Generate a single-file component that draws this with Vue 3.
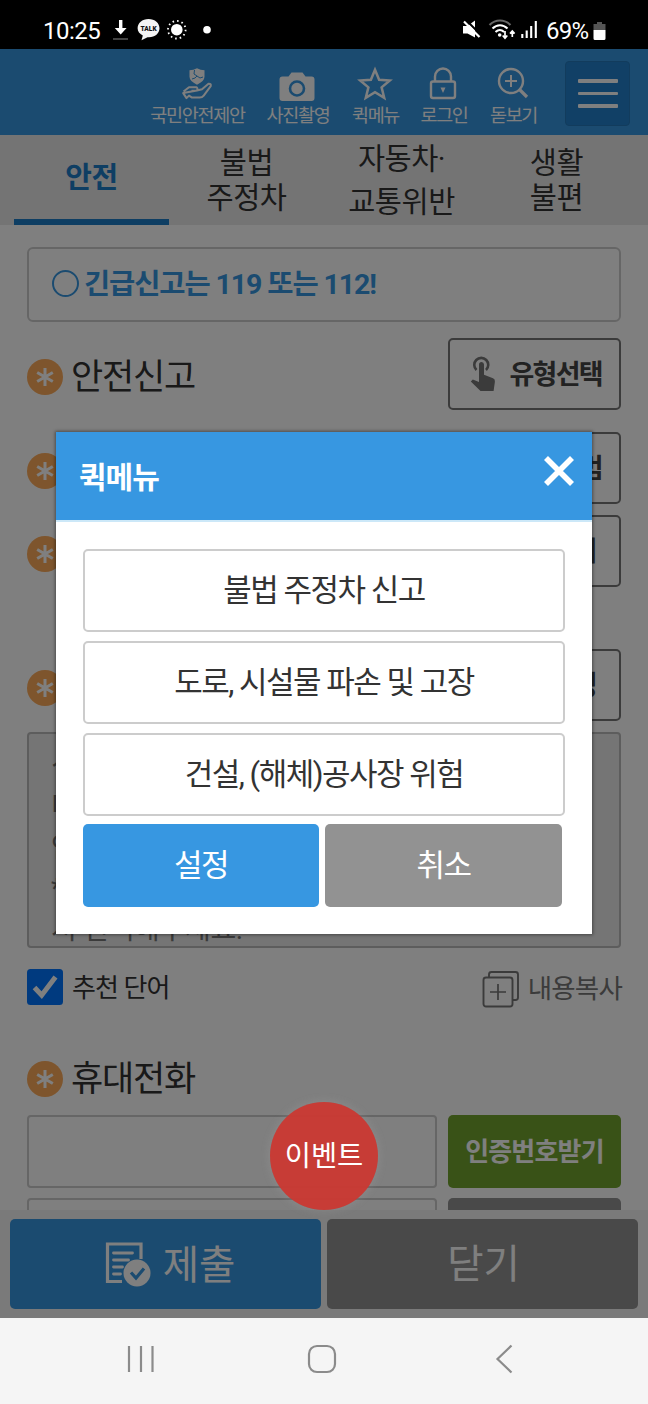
<script setup>
const tools = [
  { name: '국민안전제안', icon: 'hand', cls: 't1' },
  { name: '사진촬영', icon: 'camera', cls: 't2' },
  { name: '퀵메뉴', icon: 'star', cls: 't3' },
  { name: '로그인', icon: 'lock', cls: 't4' },
  { name: '돋보기', icon: 'zoom', cls: 't5' },
]
const tabs = [
  { lines: ['안전'], active: true },
  { lines: ['불법', '주정차'] },
  { lines: ['자동차·', '교통위반'], loose: true },
  { lines: ['생활', '불편'] },
]
const rows = [
  { label: '안전신고', action: '유형선택', cls: 'r1', touch: true },
  { action: '앨범', cls: 'r2' },
  { action: '찾기', cls: 'r3' },
  { action: '음성', cls: 'r4' },
]
const quick = ['불법 주정차 신고', '도로, 시설물 파손 및 고장', '건설, (해체)공사장 위험']
</script>

<template>
  <div class="phone">
    <header class="status">
      <span class="clock">10:25</span>
      <svg class="status-left" width="106" height="30" viewBox="110 16 106 30">
        <path d="M119 21h3.400v8h4.200l-5.900 6.500-5.900-6.500h4.200z" fill="#fff" />
        <path d="M113 40h15" stroke="#555" stroke-width="1.600" />
        <path d="M148.500 20c6.500 0 11 4.200 11 9.300s-4.500 9-10.500 9l-1.500-.1-6 3 1.300-4.600c-3.200-1.700-5.200-4.300-5.200-7.300 0-5.100 4.600-9.300 10.900-9.300z" fill="#f4f4f4" />
        <text x="148.600" y="32.300" text-anchor="middle" font-family="Roboto, sans-serif" font-weight="900" font-size="7" textLength="16" lengthAdjust="spacingAndGlyphs" fill="#111">TALK</text>
        <circle cx="176.800" cy="30.700" r="5.800" fill="#fff" />
        <circle cx="176.800" cy="30.700" r="8.800" fill="none" stroke="#fff" stroke-width="1.800" stroke-dasharray="1.6 3.007" />
        <circle cx="207" cy="30.700" r="3.800" fill="#fff" />
      </svg>
      <svg class="status-right" width="80" height="30" viewBox="460 16 80 30">
        <path d="M463 27h4.500l7.500-5.500v17L467.500 34.500H463z" fill="#fff" />
        <path d="M465.500 20.500l16 16" stroke="#000" stroke-width="2" />
        <path d="M464 22.500l15.500 15.500" stroke="#fff" stroke-width="2.200" />
        <g fill="none" stroke="#fff" stroke-width="2.100">
          <path d="M489.500 26c6-6 15-6 21 0" stroke="#666" />
          <path d="M492.500 29.500c4.500-4.300 10.500-4.300 15 0M495.500 33c2.800-2.500 6-2.500 8.600 0" />
          <path d="M505 32v7m-2.300-2.500 2.300 2.600 2.300-2.600M512.300 38v-6m-2.300 2.600 2.300-2.600 2.300 2.600" stroke-width="1.700" />
        </g>
        <circle cx="499.700" cy="36" r="1.800" fill="#fff" />
        <path d="M522.300 35v4M526.700 31.500V39M531.200 27v12M535.800 22v17" stroke="#fff" stroke-width="2.100" />
      </svg>
      <span class="charge">69%</span>
      <svg class="battery" width="13" height="20" viewBox="0 0 13 20">
        <path d="M4 1h5v2h3.500v6H.5V3H4z" fill="#555" />
        <path d="M.5 9h12v8.500a1.500 1.500 0 0 1-1.500 1.500H2a1.500 1.500 0 0 1-1.500-1.500z" fill="#fff" />
      </svg>
    </header>

    <main class="app">
      <div class="toolbar">
        <div v-for="t in tools" :key="t.name" class="tool" :class="t.cls">
          <svg width="40" height="38" viewBox="0 0 40 38" fill="none" stroke="#fff" stroke-width="2.400">
            <g v-if="t.icon === 'hand'">
              <path d="M12.500 4.200q4 0 7.500-2 3.500 2 7.500 2v6.500q0 4.300-7.500 8-7.500-3.700-7.500-8z" fill="#fff" stroke="none" />
              <path d="M15 13l3-1 2-2 3 2 3-1M17.500 4l-.5 4 3 2" stroke="#3797e1" stroke-width="1" />
              <path d="M6.500 25.500l5.500-4.300h7.500q2 1.800 0 3.500h-5M20 24.500l5-1.200 6.500-5.500q3-.2 2.200 2.300l-7 9.500q-1.500 2-4 2H15l-3-2-2.500 2.500-3.300-5z" stroke-width="2" stroke-linejoin="round" />
            </g>
            <g v-else-if="t.icon === 'camera'">
              <path d="M5.500 10.500h6l3-4h11l3 4h6q3 0 3 3V32q0 3-3 3h-29q-3 0-3-3V13.500q0-3 3-3z" fill="#fff" stroke="none" />
              <circle cx="20" cy="22.500" r="7" stroke="#3797e1" stroke-width="2.600" />
            </g>
            <path v-else-if="t.icon === 'star'" d="M20 3.800l4.100 9.900 10.700.8-8.200 6.900 2.600 10.400L20 26.200l-9.200 5.600 2.600-10.400-8.200-6.900 10.700-.8z" stroke-width="2.500" />
            <g v-else-if="t.icon === 'lock'">
              <rect x="8" y="15.500" width="24" height="16.500" rx="2" />
              <path d="M12 16v-5.500a8 8 0 0 1 16 0V16" />
              <path d="M17.500 21.500h5L20 27z" fill="#fff" stroke="none" />
            </g>
            <g v-else>
              <circle cx="18" cy="15" r="12" />
              <path d="M26.500 23.500l7.500 7.500" stroke-width="3.200" />
              <path d="M12 15h12M18 9v12" stroke-width="2" />
            </g>
          </svg>
          <span>{{ t.name }}</span>
        </div>
        <button class="burger"><i></i><i></i><i></i></button>
      </div>

      <nav class="tabs">
        <div v-for="tab in tabs" :key="tab.lines[0]" class="tab" :class="{ active: tab.active, loose: tab.loose }">
          <span v-for="l in tab.lines" :key="l">{{ l }}</span>
        </div>
      </nav>

      <section class="form">
        <div class="notice">
          <svg width="27" height="27" viewBox="0 0 27 27"><circle cx="13.500" cy="13.500" r="12.500" fill="none" stroke="#3797e1" stroke-width="2" /></svg>
          <b>긴급신고는 119 또는 112!</b>
        </div>

        <div v-for="r in rows" :key="r.cls" class="row" :class="r.cls">
          <svg class="req" width="36" height="36" viewBox="0 0 36 36">
            <circle cx="18" cy="18" r="18" fill="#fcab5a" />
            <path d="M18 9v18M10.200 13.500l15.600 9M25.800 13.500l-15.600 9" stroke="#fff" stroke-width="3" />
          </svg>
          <span class="label">{{ r.label }}</span>
          <button class="action">
            <svg v-if="r.touch" width="26" height="36" viewBox="0 0 26 36">
              <path d="M6.500 14a7 7 0 1 1 9.500 0" fill="none" stroke="#767676" stroke-width="2.600" />
              <path d="M9 8.500a2.500 2.500 0 0 1 5 0v10.200l9 3.600q2.300 1 1.900 3.400L23.600 35H10.500L.8 25.500l2-2L9 26z" fill="#767676" />
            </svg>
            <span>{{ r.action }}</span>
          </button>
        </div>

        <div class="textarea">
          <p>신</p>
          <p>미</p>
          <p>안</p>
          <p>*</p>
          <p>서 선택해주세요.</p>
        </div>

        <div class="options">
          <svg width="36" height="36" viewBox="0 0 36 36">
            <rect width="36" height="36" rx="3.500" fill="#0075ff" />
            <path d="M7.500 18.500l7.200 7.700L28.500 8" fill="none" stroke="#fff" stroke-width="5" />
          </svg>
          <span class="suggest">추천 단어</span>
          <svg class="copy" width="38" height="38" viewBox="0 0 38 38" fill="none" stroke="#767676" stroke-width="1.900">
            <path d="M7 7V4.500Q7 2 9.500 2h24Q36 2 36 4.500v23Q36 30 33.500 30H31" />
            <rect x="1.500" y="7.500" width="29" height="29" rx="2.500" />
            <path d="M16 14v16M8 22h16" stroke-width="1.700" />
          </svg>
          <span class="copy-label">내용복사</span>
        </div>

        <div class="row phone-row">
          <svg class="req" width="36" height="36" viewBox="0 0 36 36">
            <circle cx="18" cy="18" r="18" fill="#fcab5a" />
            <path d="M18 9v18M10.200 13.500l15.600 9M25.800 13.500l-15.600 9" stroke="#fff" stroke-width="3" />
          </svg>
          <span class="label">휴대전화</span>
        </div>
        <div class="pair"><div class="input"></div><button class="verify">인증번호받기</button></div>
        <div class="pair second"><div class="input"></div><button class="verify grey"></button></div>
      </section>

      <footer class="actions">
        <button class="submit">
          <svg width="46" height="46" viewBox="0 0 46 46" fill="none" stroke="#fff" stroke-width="3.200">
            <path d="M36 18V3H2.500v37.500H17" />
            <path d="M8.500 12h19M8.500 19h15M8.500 26h9M8.500 33h7" stroke-width="2.800" stroke-linecap="round" />
            <circle cx="32" cy="32" r="13.500" fill="#fff" stroke="none" />
            <path d="M26 31.500l5 5.500 8-9.500" stroke="#3797e1" />
          </svg>
          <span>제출</span>
        </button>
        <button class="close"><span>닫기</span></button>
      </footer>

      <div class="dim">
        <div class="modal">
          <div class="modal-head">
            <h2>퀵메뉴</h2>
            <svg width="34" height="34" viewBox="0 0 34 34"><path d="M4 4l26 26M30 4L4 30" stroke="#fff" stroke-width="5.600" /></svg>
          </div>
          <div class="modal-body">
            <button v-for="q in quick" :key="q" class="item">{{ q }}</button>
            <div class="modal-actions">
              <button class="set">설정</button>
              <button class="cancel">취소</button>
            </div>
          </div>
        </div>
        <div class="event">이벤트</div>
      </div>
    </main>

    <footer class="navbar">
      <svg width="648" height="86" viewBox="0 1318 648 86" fill="none" stroke="#8b8b8b" stroke-width="2.200">
        <path d="M129 1346v26M141 1346v26M152.500 1346v26" />
        <rect x="309" y="1346" width="26" height="26" rx="8" />
        <path d="M511.500 1345.500l-14 13.500 14 13.500" />
      </svg>
    </footer>
  </div>
</template>

<style>
body { margin: 0; overflow: hidden; }
</style>

<style scoped>
.phone { width: 648px; height: 1404px; display: flex; flex-direction: column; overflow: hidden; font-family: Roboto, "Noto Sans CJK KR", sans-serif; color: #333; }
.phone * { box-sizing: border-box; }
button { font: inherit; border: 0; padding: 0; margin: 0; color: inherit; white-space: nowrap; letter-spacing: inherit; }
svg { flex: none; display: block; }
.status { height: 49px; background: #000; color: #fff; display: flex; align-items: center; padding: 12px 41px 0 43px; font-size: 24px; flex: none; }
.clock { width: 67px; letter-spacing: -.5px; }
.status-left { margin-right: 244px; }
.charge { letter-spacing: -.8px; margin-left: 6px; width: 47px; }
.status-right, .status-left { margin-top: -2px; }
.app { position: relative; height: 1269px; flex: none; display: flex; flex-direction: column; background: #fff; overflow: hidden; }
.toolbar { height: 86px; flex: none; background: #3797e1; display: flex; color: #fff; padding-left: 142px; }
.tool { display: flex; flex-direction: column; align-items: center; padding-top: 17px; font-size: 18.500px; letter-spacing: -1.300px; line-height: 25px; white-space: nowrap; }
.tool svg { margin-left: -1px; }
.tool span { margin-left: 1px; }
.t1 { width: 110px; } .t2 { width: 91px; } .t3 { width: 64px; } .t4 { width: 73px; } .t5 { width: 66px; }
.burger { width: 65px; height: 65px; margin: 12px 0 0 19px; background: #2381cc; border: 1px solid #2478bb; border-radius: 4px; display: flex; flex-direction: column; align-items: center; justify-content: center; gap: 9px; }
.burger i { width: 40px; height: 3.500px; background: #fff; border-radius: 1px; }
.tabs { height: 90px; flex: none; background: #e9e9e9; display: grid; grid-template-columns: repeat(4, 155px); padding: 0 14px; }
.tab { display: flex; flex-direction: column; align-items: center; justify-content: center; font-size: 29.500px; letter-spacing: -.5px; line-height: 35px; padding-top: 1px; }
.tab.loose { line-height: 43px; padding-top: 1px; }
.tab.active { color: #1d7cc7; font-weight: 700; border-bottom: 6px solid #1d7cc7; font-size: 29px; padding-top: 3px; }
.form { height: 985px; flex: none; padding: 22px 27px 0; overflow: hidden; display: flex; flex-direction: column; }
.notice { height: 75px; flex: none; border: 2px solid #ccc; border-radius: 6px; display: flex; align-items: center; padding: 0 0 3px 23px; gap: 5px; color: #3797e1; font-size: 28.500px; letter-spacing: -1.100px; }
.notice b { margin-top: -3px; }
.row { display: flex; align-items: center; height: 72px; flex: none; }
.r1 { margin-top: 16px; } .r2 { margin-top: 22px; } .r3 { margin-top: 11px; } .r4 { margin-top: 62px; }
.req { margin-top: 5px; }
.label { flex: 1; margin: 8px 0 0 8px; font-size: 35px; letter-spacing: -1.200px; line-height: 50px; }
.action { width: 173px; height: 72px; border: 2px solid #767676; border-radius: 5px; background: #fff; display: flex; align-items: center; justify-content: flex-end; padding-right: 17px; gap: 13px; font-size: 27px; font-weight: 700; letter-spacing: -1.700px; color: #444; }
.action span { margin-top: -3px; }
.r3 .action, .r4 .action { padding-right: 23px; }
.textarea { margin-top: 11px; height: 216px; flex: none; border: 2px solid #bbb; border-radius: 4px; background: #eaeaea; padding: 11px 22px; font-size: 28px; letter-spacing: -.3px; line-height: 41px; color: #767676; overflow: hidden; }
.textarea p { margin: 0; }
.options { display: flex; align-items: center; margin-top: 20px; height: 38px; flex: none; }
.suggest { font-size: 26px; letter-spacing: -.900px; margin: -3px 0 0 9px; flex: 1; }
.copy { margin-top: 3px; }
.copy-label { font-size: 26.500px; letter-spacing: -.8px; margin: -2px -1px 0 8px; color: #767676; }
.phone-row { margin-top: 34px; height: 72px; }
.pair { display: flex; gap: 11px; flex: none; margin-top: 3px; height: 73px; }
.pair.second { margin-top: 10px; }
.input { width: 410px; border: 2px solid #ccc; border-radius: 4px; }
.verify { width: 173px; border-radius: 5px; background: #72a52e; color: #fff; font-size: 26px; font-weight: 700; letter-spacing: -.8px; padding-bottom: 5px; }
.verify.grey { background: #929292; }
.actions { height: 108px; flex: none; background: #f5f5f5; padding: 9px 10px; display: flex; gap: 6px; color: #fff; font-size: 39.500px; }
.actions button { width: 311px; height: 90px; border-radius: 5px; display: flex; align-items: center; justify-content: center; }
.actions span { margin-top: -8px; }
.submit { background: #3797e1; gap: 12px; }
.actions .submit { padding: 0 0 0 9px; }
.actions .submit span { margin-top: -6px; }
.close { background: #929292; }
.actions .close { padding: 1px 0 0 2px; }
.dim { position: absolute; inset: 0; background: rgba(0, 0, 0, .5); }
.modal { position: absolute; left: 56px; top: 383px; width: 536px; height: 502px; background: #fff; box-shadow: 0 0 3px 1px rgba(0, 0, 0, .4); }
.modal-head { height: 90px; background: #3797e1; border-bottom: 2px solid #cce8f8; display: flex; align-items: center; justify-content: space-between; padding: 0 16px 0 23px; color: #fff; }
.modal-head svg { margin-top: -10px; }
h2 { margin: -2px 0 0; font-size: 30px; font-weight: 700; letter-spacing: -1px; }
.modal-body { padding: 27px; display: flex; flex-direction: column; gap: 9px; font-size: 31px; letter-spacing: -1.500px; }
.item { height: 83px; border: 2px solid #ccc; border-radius: 5px; background: #fff; padding-bottom: 7px; }
.modal-actions { display: flex; gap: 6px; color: #fff; margin-top: -1px; }
.modal-actions button { width: 236px; height: 83px; border-radius: 5px; padding-bottom: 6px; }
.modal-actions .cancel { width: 237px; background: #929292; }
.set { background: #3797e1; }
.event { position: absolute; left: 270px; top: 1053px; width: 108px; height: 108px; padding-bottom: 5px; border-radius: 50%; background: rgba(204, 56, 50, .94); color: #fff; display: flex; align-items: center; justify-content: center; font-size: 28.500px; letter-spacing: 0; box-shadow: 0 0 10px rgba(190, 190, 190, .22); }
.navbar { height: 86px; background: #f5f5f5; }
</style>
